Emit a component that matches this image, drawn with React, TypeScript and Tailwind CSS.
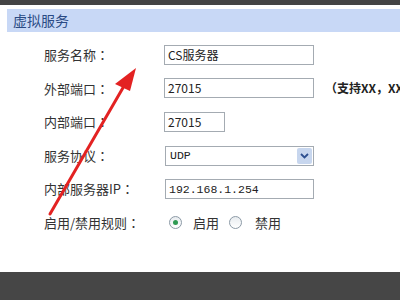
const cjk = { fontFamily: '"Noto Sans CJK SC", "Liberation Sans", sans-serif' };
const jp = { fontFamily: '"Noto Sans CJK JP", "Liberation Sans", sans-serif' };
const mono = { fontFamily: '"Liberation Mono", "Noto Sans CJK SC", monospace' };

function Row({ label, children }: { label: string; children: React.ReactNode }) {
  return (
    <div className="flex h-[33.6px] items-center">
      <div className="w-[120px] shrink-0 text-[13px] text-[#333]" style={cjk}>
        {label}
        <span style={jp}>：</span>
      </div>
      {children}
    </div>
  );
}

function TextBox({ value, width, mono: isMono }: { value: string; width: string; mono?: boolean }) {
  return (
    <div
      className={`${width} flex h-[20px] shrink-0 items-center border border-[#a4abb2] bg-white px-[3px] text-[#222] ${isMono ? 'text-[11.5px]' : 'text-[12px]'}`}
      style={isMono ? mono : cjk}
    >
      {value}
    </div>
  );
}

function Radio({ checked }: { checked?: boolean }) {
  return (
    <span className="flex h-[13px] w-[13px] items-center justify-center rounded-full border border-[#8c9aa6] bg-gradient-to-b from-[#e8ecef] to-white">
      {checked && <span className="h-[5px] w-[5px] rounded-full bg-[#2f9a52]" />}
    </span>
  );
}

export default function App() {
  return (
    <div className="relative flex h-[300px] w-[400px] flex-col overflow-hidden bg-white">
      <div className="h-[5px] bg-[#444]" />
      <div className="ml-[7px] mt-[4px] flex h-[23px] items-center bg-[#c8d8f6] pl-[6px] text-[14px] text-[#2a4a84]" style={cjk}>
        虚拟服务
      </div>
      <div className="mt-[6px] flex flex-col pl-[44px]">
        <Row label="服务名称">
          <TextBox value="CS服务器" width="w-[150px]" />
        </Row>
        <Row label="外部端口">
          <TextBox value="27015" width="w-[150px]" />
          <span className="ml-[11px] shrink-0 whitespace-nowrap text-[12px] font-bold text-[#222]" style={jp}>
            （支持XX，XX）
          </span>
        </Row>
        <Row label="内部端口">
          <TextBox value="27015" width="w-[61px]" />
        </Row>
        <Row label="服务协议">
          <div className="ml-[1px] flex h-[20px] w-[149px] shrink-0 items-center justify-between border border-[#a4abb2] bg-white pl-[4px] pr-[1px] text-[11.5px] text-[#222]" style={mono}>
            UDP
            <span className="flex h-[16px] w-[15px] items-center justify-center rounded-[2px] bg-[#c7d6ee]">
              <svg width="9" height="6" viewBox="0 0 9 6">
                <path d="M1 1l3.5 3.5L8 1" fill="none" stroke="#2d4f8f" strokeWidth="1.8" />
              </svg>
            </span>
          </div>
        </Row>
        <Row label="内部服务器IP">
          <div className="ml-[1px]">
            <TextBox value="192.168.1.254" width="w-[149px]" mono />
          </div>
        </Row>
        <Row label="启用/禁用规则">
          <div className="ml-[5px] flex items-center text-[13px] text-[#333]" style={cjk}>
            <Radio checked />
            <span className="ml-[11px]">启用</span>
            <span className="ml-[10px]">
              <Radio />
            </span>
            <span className="ml-[13px]">禁用</span>
          </div>
        </Row>
      </div>
      <div className="mt-auto h-[28px] bg-[#464646]" />
      <svg className="pointer-events-none absolute left-0 top-0" width="400" height="300">
        <line x1="50" y1="214" x2="124" y2="86" stroke="#e32222" strokeWidth="3" strokeLinecap="round" />
        <polygon points="136,68 115,84 130,91" fill="#e32222" />
      </svg>
    </div>
  );
}
